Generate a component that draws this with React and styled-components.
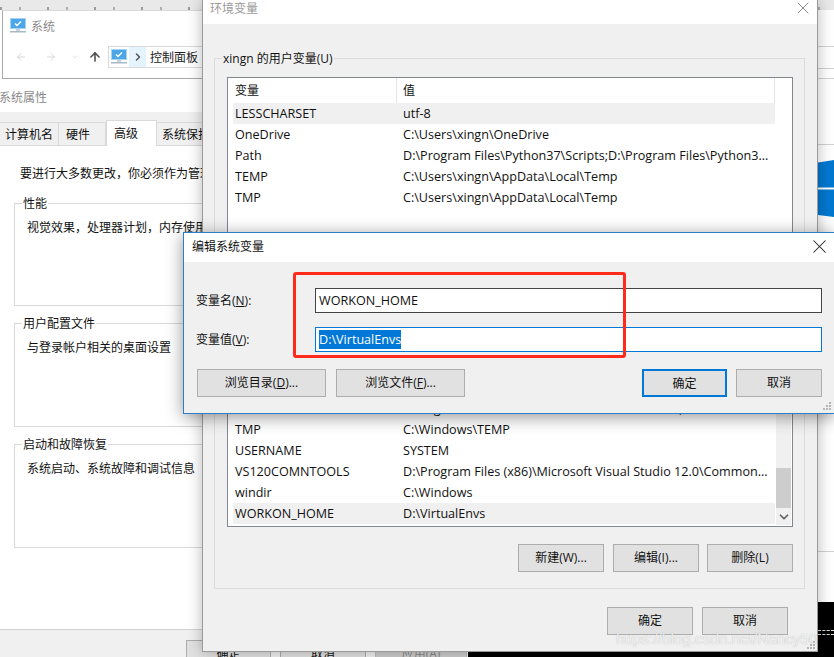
import React from "react";
import styled, { createGlobalStyle } from "styled-components";
import { ArrowLeft, ArrowRight, ArrowUp, ChevronDown, ChevronRight, X } from "lucide-react";

const Global = createGlobalStyle`
  html, body { margin: 0; padding: 0; background: #fff; }
  * { box-sizing: border-box; }
  body { font-family: "Open Sans", "Noto Sans CJK SC", sans-serif; font-size: 12px; color: #111; }
`;

const Screen = styled.div`
  position: relative; width: 834px; height: 657px; overflow: hidden; background: #fff;
`;
const Win = styled.section`
  position: absolute; left: ${p => p.$l}px; top: ${p => p.$t}px; width: ${p => p.$w}px; height: ${p => p.$h}px;
  display: flex; flex-direction: column; overflow: hidden;
`;
const TopStrip = styled.div`
  position: absolute; left: 0; top: 0; width: 834px; height: 10px; background: #e9e9e9;
`;
const TopMarks = styled.div`
  height: 3px; margin-top: 7px; opacity: .6;
  background: repeating-linear-gradient(90deg, #666 0 2px, transparent 2px 19px, #888 19px 21px, transparent 21px 47px);
`;
const Edge = styled.aside`
  position: absolute; left: 818px; top: 10px; width: 16px; height: 592px;
  display: flex; flex-direction: column;
`;
const Rule = styled.div`
  height: 1px; flex: none; background: #d2d2d2; margin-top: ${p => p.$gap}px;
`;
const LogoPart = styled.svg`
  display: block; flex: none; width: 16px; height: 57px; margin-top: 15px;
`;
const Terminal = styled.div`
  position: absolute; left: 468px; top: 602px; width: 366px; height: 55px; background: #000;
  display: flex; justify-content: flex-end; padding-top: 28px;
`;
const Dashes = styled.div`
  width: 16px; height: 5px;
  border-top: 1px dashed #ddd; border-bottom: 1px dashed #ddd;
`;

/* Explorer window behind everything */
const ExplorerTitle = styled.div`
  height: 30px; display: flex; align-items: center; gap: 5px; padding: 0 0 0 7px; color: #8a8a8a; flex: none;
`;
const ExplorerFrame = styled(Win)`
  background: #fff; border-left: 1px solid #a8a8a8; border-top: 1px solid #d8d8d8; border-bottom: 1px solid #a8a8a8;
`;
const NavRow = styled.div`
  display: flex; align-items: center; height: 22px; margin-top: 5px; flex: none; padding-left: 12px;
`;
const NavSlot = styled.span`
  display: flex; justify-content: center; align-items: center; width: ${p => p.$w}px; flex: none; margin-left: ${p => p.$ml || 0}px;
`;
const Crumbs = styled.div`
  display: flex; align-items: stretch; height: 22px; flex: 1; border: 1px solid #d9d9d9; margin-left: 6px; border-right: 0;
`;
const CrumbIcon = styled.span`
  display: flex; align-items: center; padding-left: 2px; width: 20px; flex: none;
`;
const CrumbSep = styled.span`
  display: flex; align-items: center; justify-content: center; width: 17px; background: #e5f3ff; flex: none;
`;
const CrumbText = styled.span`
  display: flex; align-items: center; padding-left: 4px; color: #222;
`;

/* System properties */
const SysFrame = styled(Win)`background: #fff;`;
const SysTitle = styled.div`
  height: 30px; flex: none; display: flex; align-items: center; color: #8a8a8a; padding-left: 1px; background: #fff;
`;
const TabStrip = styled.div`
  height: 34px; flex: none; background: #f0f0f0; display: flex; align-items: flex-end; padding-left: 2px;
  border-bottom: 1px solid #d9d9d9;
`;
const Tab = styled.div`
  width: ${p => p.$w}px; flex: none; height: ${p => (p.$on ? 26 : 24)}px; margin-bottom: -1px;
  padding: ${p => (p.$on ? "3px" : "2px")} 0 0 ${p => p.$pl}px;
  background: ${p => (p.$on ? "#fff" : "#f0f0f0")};
  border: 1px solid #d9d9d9; border-bottom: ${p => (p.$on ? "0" : "1px solid #d9d9d9")};
  border-left: ${p => (p.$on ? "1px solid #d9d9d9" : "0")};
  white-space: nowrap;
`;
const SysContent = styled.div`
  flex: none; height: 483px; padding: 19px 0 0 16px; background: #fff; display: flex; flex-direction: column;
`;
const Intro = styled.p`
  margin: 0 0 21px 6px; line-height: 17px; white-space: nowrap;
`;
const SysGroup = styled.div`
  position: relative; width: 440px; height: ${p => p.$h}px; flex: none; margin-bottom: 17px;
  border: 1px solid #d9d9d9; padding: 14px 0 0 12px;
`;
const Legend = styled.span`
  position: absolute; left: 7px; top: -9px; padding: 0 1px; line-height: 17px; background: ${p => p.$bg || "#fff"}; white-space: nowrap;
`;
const SysFooter = styled.div`
  flex: 1; background: #f0f0f0; border-top: 1px solid #d2d2d2; display: flex; gap: 9px; padding: 10px 0 0 188px;
`;
const Btn = styled.button`
  width: ${p => p.$w || 86}px; height: 28px; flex: none; padding: 0; border-radius: 0;
  font: inherit; line-height: 26px; white-space: nowrap; text-align: center; color: ${p => p.$off ? "#8a8a8a" : "#111"};
  background: ${p => p.$off ? "#cccccc" : "#e1e1e1"};
  border: ${p => p.$primary ? "2px solid #0078d7" : p.$off ? "1px solid #bfbfbf" : "1px solid #adadad"};
  margin: 0 ${p => p.$mr || 0}px 0 0;
`;

/* Environment variables */
const EnvFrame = styled(Win)`
  background: #f0f0f0; border: 1px solid #9a9a9a; border-top: 0; box-shadow: 0 0 14px rgba(0,0,0,.28);
  overflow: visible;
`;
const EnvTitle = styled.div`
  height: 24px; flex: none; background: #fff; color: #9a9a9a; display: flex; align-items: center; justify-content: space-between;
  padding: 0 4px 8px 7px;
`;
const EnvBody = styled.div`
  flex: 1; padding: 34px 12px 0 11px; display: flex; flex-direction: column;
`;
const Group = styled.div`
  position: relative; border: 1px solid #dcdcdc; padding: 18px 11px 0 12px; flex: none;
  margin-top: ${p => p.$mt || 0}px; padding-bottom: ${p => p.$pb}px;
`;
const ListBox = styled.div`
  display: flex; background: #fff; border: 1px solid #828790; height: ${p => p.$h}px; padding: 0 1px 1px 5px; overflow: hidden;
`;
const Rows = styled.div`
  width: 542px; flex: none; margin-right: 1px; display: flex; flex-direction: column;
`;
const HeadRow = styled.div`
  display: grid; grid-template-columns: 164px 1fr; height: 25px; flex: none; line-height: 25px; border-right: 1px solid #e5e5e5;
`;
const HeadCell = styled.div`
  padding-left: ${p => p.$pl}px; border-right: ${p => p.$sep ? "1px solid #e5e5e5" : "0"};
`;
const Row = styled.div`
  display: grid; grid-template-columns: 170px 1fr; height: 21px; flex: none; line-height: 21px; font-size: 12.6px;
  background: ${p => p.$on ? "#f0f0f0" : "transparent"}; white-space: nowrap;
`;
const Cell = styled.div`
  padding-left: ${p => p.$pl || 0}px; overflow: hidden;
`;
const ScrollBar = styled.div`
  width: 15px; flex: none; background: #f0f0f0; display: flex; flex-direction: column;
`;
const ScrollThumb = styled.div`
  height: 40px; margin-top: 179px; background: #cdcdcd; flex: none;
`;
const ScrollDown = styled.div`
  flex: 1; display: flex; align-items: center; justify-content: center; color: #606060;
`;
const GroupActions = styled.div`
  display: flex; justify-content: flex-end; gap: 8px; margin-top: 17px;
`;
const EnvFooter = styled.div`
  display: flex; justify-content: flex-end; gap: 9px; margin-top: 18px; padding-right: 17px;
`;
const Grip = styled.svg`
  position: absolute; right: ${p => p.$r}px; bottom: ${p => p.$b}px; width: 9px; height: 9px;
`;

/* Edit dialog */
const DialogFrame = styled(Win)`
  background: #f0f0f0; border: 1px solid #2b7fc7; border-right: 0; box-shadow: 0 3px 16px rgba(0,0,0,.42); overflow: visible;
`;
const DialogTitle = styled.div`
  height: 29px; flex: none; background: #fff; display: flex; align-items: center; justify-content: space-between; padding: 0 3px 3px 8px;
`;
const DialogBody = styled.div`
  flex: 1; padding: 26px 12px 0 12px; display: flex; flex-direction: column;
`;
const FormGrid = styled.div`
  display: grid; grid-template-columns: 119px 1fr; row-gap: 14px; align-items: center;
`;
const FieldLabel = styled.label`
  white-space: nowrap; line-height: 25px;
`;
const Field = styled.div`
  height: 25px; background: #fff; border: 1px solid ${p => p.$focus ? "#0078d7" : "#444"}; padding: 0 0 1px 3px; font-size: 12.6px; line-height: 21px; display: flex; align-items: center;
`;
const Selected = styled.span`
  background: #0078d7; color: #fff; line-height: 19px;
`;
const DialogActions = styled.div`
  display: flex; margin-top: 17px; padding-left: 1px; gap: 10px;
`;
const Spacer = styled.div`flex: 1;`;
const RedBox = styled.div`
  position: absolute; left: 109px; top: 39px; width: 333px; height: 86px; border: 3px solid #ff2a1a; border-radius: 3px; pointer-events: none;
`;
const Watermark = styled.div`
  position: absolute; left: 616px; top: 630px; font: 15.3px "Liberation Sans", Arial, sans-serif; white-space: nowrap;
  color: rgba(255,255,255,.78); text-shadow: 0 0 1px rgba(110,110,110,.5); pointer-events: none;
`;

const MonitorIcon = ({ size = 16 }) => (
  <svg width={size} height={size} viewBox="0 0 16 16" style={{ flex: "none" }}>
    <rect x="0.5" y="0.5" width="15" height="10" fill="#4ba6ea" stroke="#a5d3f2" />
    <path d="M5 5.5l2 2 4-4" stroke="#fff" strokeWidth="1.4" fill="none" />
    <rect x="6" y="11" width="4" height="2" fill="#c8d2da" />
    <rect x="0" y="13" width="16" height="1.5" fill="#a9bac7" />
  </svg>
);
const GripDots = ({ r, b, color }) => (
  <Grip $r={r} $b={b} viewBox="0 0 9 9">
    {[[6, 0], [3, 3], [6, 3], [0, 6], [3, 6], [6, 6]].map(([x, y]) => (
      <rect key={`${x}-${y}`} x={x} y={y} width="2" height="2" fill={color} />
    ))}
  </Grip>
);

const userVars = [
  ["LESSCHARSET", "utf-8", true],
  ["OneDrive", "C:\\Users\\xingn\\OneDrive"],
  ["Path", "D:\\Program Files\\Python37\\Scripts;D:\\Program Files\\Python3..."],
  ["TEMP", "C:\\Users\\xingn\\AppData\\Local\\Temp"],
  ["TMP", "C:\\Users\\xingn\\AppData\\Local\\Temp"],
];
const systemVars = [
  ["ComSpec", "C:\\Windows\\system32\\cmd.exe"],
  ["NUMBER_OF_PROCESSORS", "8"],
  ["OS", "Windows_NT"],
  ["PATHEXT", ".COM;.EXE;.BAT;.CMD;.VBS;.VBE;.JS;.JSE;.WSF;.WSH;.MSC"],
  ["PSModulePath", "%ProgramFiles%\\WindowsPowerShell\\Modules;C:\\Windows\\..."],
  ["TMP", "C:\\Windows\\TEMP"],
  ["USERNAME", "SYSTEM"],
  ["VS120COMNTOOLS", "D:\\Program Files (x86)\\Microsoft Visual Studio 12.0\\Common..."],
  ["windir", "C:\\Windows"],
  ["WORKON_HOME", "D:\\VirtualEnvs", true],
];

const VarRows = ({ items }) => (
  <Rows>
    <HeadRow>
      <HeadCell $pl={2} $sep>变量</HeadCell>
      <HeadCell $pl={6}>值</HeadCell>
    </HeadRow>
    {items.map(([k, v, on]) => (
      <Row key={k + v} $on={on}>
        <Cell $pl={2}>{k}</Cell>
        <Cell>{v}</Cell>
      </Row>
    ))}
  </Rows>
);

export default function App() {
  return (
    <Screen>
      <Global />
      <TopStrip><TopMarks /></TopStrip>
      <Edge>
        <Rule $gap={36} />
        <Rule $gap={21} />
        <Rule $gap={9} />
        <Rule $gap={65} />
        <LogoPart viewBox="0 0 16 57">
          <path d="M0 2.5L16 0V27.5H0Z" fill="#0078d0" />
          <path d="M0 29.5H16V57L0 55Z" fill="#0078d0" />
        </LogoPart>
        <Rule $gap={334} />
      </Edge>
      <Terminal><Dashes /></Terminal>

      <ExplorerFrame $l={2} $t={10} $w={300} $h={69}>
        <ExplorerTitle><MonitorIcon /><span>系统</span></ExplorerTitle>
        <NavRow>
          <NavSlot $w={12}><ArrowLeft size={20} color="#d4d4d4" strokeWidth={1.8} /></NavSlot>
          <NavSlot $w={12} $ml={18}><ArrowRight size={20} color="#d4d4d4" strokeWidth={1.8} /></NavSlot>
          <NavSlot $w={8} $ml={14}><ChevronDown size={10} color="#d4d4d4" strokeWidth={2} /></NavSlot>
          <NavSlot $w={14} $ml={9}><ArrowUp size={20} color="#555" strokeWidth={2.8} /></NavSlot>
          <Crumbs>
            <CrumbIcon><MonitorIcon /></CrumbIcon>
            <CrumbSep><ChevronRight size={12} color="#555" strokeWidth={3} /></CrumbSep>
            <CrumbText>控制面板</CrumbText>
          </Crumbs>
        </NavRow>
      </ExplorerFrame>

      <SysFrame $l={-2} $t={82} $w={470} $h={575}>
        <SysTitle>系统属性</SysTitle>
        <TabStrip>
          <Tab $w={59} $pl={5}>计算机名</Tab>
          <Tab $w={47} $pl={7}>硬件</Tab>
          <Tab $w={51} $on $pl={7}>高级</Tab>
          <Tab $w={80} $pl={5}>系统保护</Tab>
        </TabStrip>
        <SysContent>
          <Intro>要进行大多数更改，你必须作为管理员登录。</Intro>
          <SysGroup $h={103}>
            <Legend>性能</Legend>
            视觉效果，处理器计划，内存使用，以及虚拟内存
          </SysGroup>
          <SysGroup $h={104}>
            <Legend>用户配置文件</Legend>
            与登录帐户相关的桌面设置
          </SysGroup>
          <SysGroup $h={104}>
            <Legend>启动和故障恢复</Legend>
            系统启动、系统故障和调试信息
          </SysGroup>
        </SysContent>
        <SysFooter>
          <Btn $w={85}>确定</Btn>
          <Btn $w={86}>取消</Btn>
          <Btn $w={92} $off>应用(A)</Btn>
        </SysFooter>
      </SysFrame>

      <EnvFrame $l={202} $t={0} $w={616} $h={652}>
        <EnvTitle>
          <span>环境变量</span>
          <X size={20} color="#8a8a8a" strokeWidth={1.2} />
        </EnvTitle>
        <EnvBody>
          <Group $pb={11}>
            <Legend $bg="#f0f0f0">xingn 的用户变量(U)</Legend>
            <ListBox $h={163}><VarRows items={userVars} /></ListBox>
          </Group>
          <Group $mt={17} $pb={16}>
            <Legend $bg="#f0f0f0">系统变量(S)</Legend>
            <ListBox $h={239}>
              <VarRows items={systemVars} />
              <ScrollBar>
                <ScrollThumb />
                <ScrollDown><ChevronDown size={14} strokeWidth={3} /></ScrollDown>
              </ScrollBar>
            </ListBox>
            <GroupActions>
              <Btn $w={86} $mr={1}>新建(W)...</Btn>
              <Btn $w={86}>编辑(I)...</Btn>
              <Btn $w={86}>删除(L)</Btn>
            </GroupActions>
          </Group>
          <EnvFooter>
            <Btn $w={86}>确定</Btn>
            <Btn $w={86}>取消</Btn>
          </EnvFooter>
        </EnvBody>
        <GripDots r={1} b={1} color="#b5b5b5" />
      </EnvFrame>

      <DialogFrame $l={183} $t={232} $w={651} $h={182}>
        <DialogTitle>
          <span>编辑系统变量</span>
          <X size={23} color="#222" strokeWidth={1.1} />
        </DialogTitle>
        <DialogBody>
          <FormGrid>
            <FieldLabel>变量名(<u>N</u>):</FieldLabel>
            <Field>WORKON_HOME</Field>
            <FieldLabel>变量值(<u>V</u>):</FieldLabel>
            <Field $focus><Selected>D:\VirtualEnvs</Selected></Field>
          </FormGrid>
          <DialogActions>
            <Btn $w={129}>浏览目录(<u>D</u>)...</Btn>
            <Btn $w={129}>浏览文件(<u>F</u>)...</Btn>
            <Spacer />
            <Btn $w={85} $primary $mr={-1}>确定</Btn>
            <Btn $w={86}>取消</Btn>
          </DialogActions>
        </DialogBody>
        <GripDots r={2} b={2} color="#b5b5b5" />
        <RedBox />
      </DialogFrame>

      <Watermark>https://blog.csdn.net/Nancy50</Watermark>
    </Screen>
  );
}
